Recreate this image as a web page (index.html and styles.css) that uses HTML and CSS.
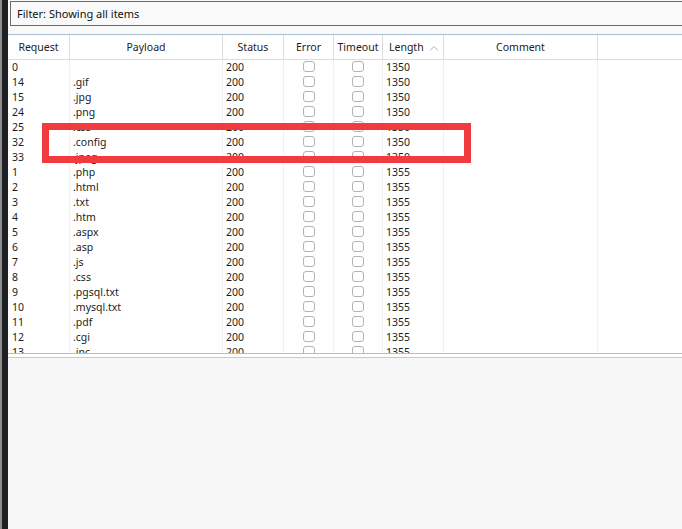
FILE: index.html
```html
<!DOCTYPE html>
<html lang="en">
<head>
    <meta charset="UTF-8">
    <title>Intruder results</title>
    <link rel="stylesheet" href="styles.css">
</head>
<body>
    <div class="side-strip"></div>

    <div class="main">
        <div class="filter-bar">Filter: Showing all items</div>

        <div class="results">
            <div class="row head">
                <div class="cell center">Request</div>
                <div class="cell center">Payload</div>
                <div class="cell center">Status</div>
                <div class="cell center">Error</div>
                <div class="cell center">Timeout</div>
                <div class="cell sorted">Length
                    <svg class="sort-arrow" width="10" height="6" viewBox="0 0 10 6"><path d="M1 5.5 L5 1.5 L9 5.5" fill="none" stroke="#b4b4b4" stroke-width="1"/></svg>
                </div>
                <div class="cell center">Comment</div>
                <div class="cell last"></div>
            </div>

            <div id="rows"></div>
        </div>

        <div class="split-line"></div>
        <div class="lower-pane"></div>
    </div>

    <!-- annotation drawn over the table -->
    <div class="highlight-box"></div>

    <script>
        var items = [
            ['0', ''], ['14', '.gif'], ['15', '.jpg'], ['24', '.png'], ['25', '.css'],
            ['32', '.config'], ['33', '.jpeg'], ['1', '.php'], ['2', '.html'], ['3', '.txt'],
            ['4', '.htm'], ['5', '.aspx'], ['6', '.asp'], ['7', '.js'], ['8', '.css'],
            ['9', '.pgsql.txt'], ['10', '.mysql.txt'], ['11', '.pdf'], ['12', '.cgi'], ['13', '.inc']
        ];
        var html = '';
        items.forEach(function(it, i) {
            var len = i < 7 ? '1350' : '1355';
            html += '<div class="row">' +
                '<div class="cell num">' + it[0] + '</div>' +
                '<div class="cell">' + it[1] + '</div>' +
                '<div class="cell">200</div>' +
                '<div class="cell center"><span class="check"></span></div>' +
                '<div class="cell center"><span class="check"></span></div>' +
                '<div class="cell">' + len + '</div>' +
                '<div class="cell"></div>' +
                '<div class="cell last"></div>' +
                '</div>';
        });
        document.getElementById('rows').innerHTML = html;
    </script>
</body>
</html>
```

FILE: styles.css
```css
* {
    margin: 0;
    padding: 0;
    box-sizing: border-box;
}

body {
    font-family: 'Noto Sans', sans-serif;
    font-size: 10.5px;
    color: #1c1c1c;
    background: #f8f8f8;
    height: 529px;
    display: flex;
    overflow: hidden;
}

.side-strip {
    width: 8px;
    flex-shrink: 0;
    background: #1f2024;
    border-left: 2px solid #8c8c8c;
}

.main {
    flex: 1;
    display: flex;
    flex-direction: column;
    background: #f9f9f9;
}

.filter-bar {
    height: 25px;
    margin: 1px 0 0 2px;
    padding-left: 6px;
    line-height: 23px;
    font-size: 11px;
    color: #111;
    background: #f9f9f9;
    border: 1px solid #6b6b6b;
    border-right: none;
}

.results {
    margin-top: 8px;
    height: 320px;
    background: #fff;
    border-top: 1px solid #a9bfd3;
    border-bottom: 1px solid #a9bfd3;
    overflow: hidden;
}

.row {
    display: grid;
    grid-template-columns: 62px 153px 61px 50px 49px 61px 154px 1fr;
    height: 15px;
    line-height: 15px;
}

.row .cell {
    padding-left: 3px;
    border-right: 1px solid #f1f1f1;
    white-space: nowrap;
    overflow: hidden;
}

.row .cell.num {
    padding-left: 4px;
}

.row .cell.center {
    padding-left: 0;
    text-align: center;
}

.row .cell.last {
    border-right: none;
}

.row.head {
    height: 25px;
    line-height: 24px;
    border-bottom: 1px solid #dcdcdc;
    color: #222;
}

.row.head .cell {
    border-right: 1px solid #dcdcdc;
}

.row.head .cell.last {
    border-right: none;
}

.row.head .sorted {
    padding-left: 6px;
}

.sort-arrow {
    margin-left: 3px;
    vertical-align: 0;
}

.check {
    display: inline-block;
    width: 12px;
    height: 11px;
    margin-top: 1px;
    border: 1px solid #b3b3b3;
    border-radius: 3px;
    background: #fff;
    vertical-align: top;
}

.split-line {
    height: 4px;
    background: #fff;
    border-bottom: 1px solid #c9c9c9;
}

.lower-pane {
    flex: 1;
    background: #f7f7f7;
}

.highlight-box {
    position: absolute;
    left: 42px;
    top: 123px;
    width: 429px;
    height: 40px;
    border: 7px solid #f23b3e;
}
```
